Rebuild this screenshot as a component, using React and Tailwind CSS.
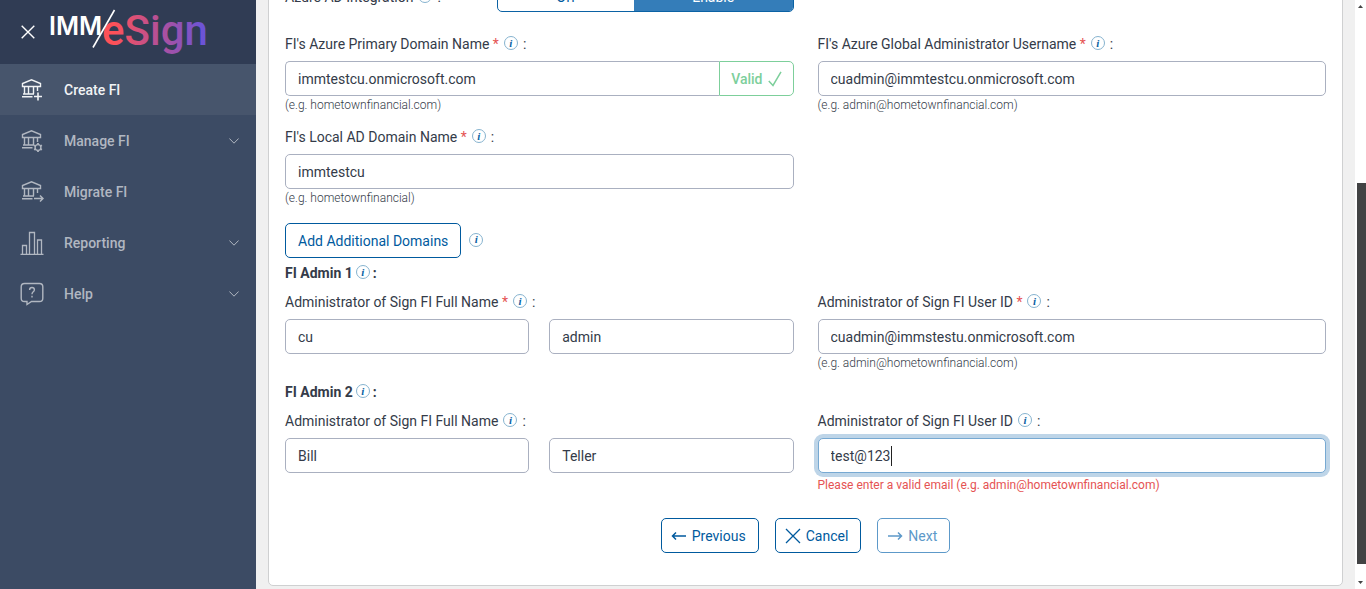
import React, { useState } from 'react';

const BankIcon = ({ children }) => (
  <svg viewBox="0 0 24 24" className="h-6 w-6 shrink-0" fill="none" stroke="currentColor" strokeWidth="1.4" aria-hidden="true">
    <path d="M2.5 8.5V5.5L11.5 1.8L20.5 5.5V8.5Z" />
    <path d="M4.5 8.5V16M8.5 8.5V16M13.5 8.5V16M17.5 8.5V13M3 16H14M2 18.7H12.5" />
    {children}
  </svg>
);

const CreateIcon = () => (
  <BankIcon>
    <path d="M18 14.5V22.5M14 18.5H22" strokeWidth="1.6" />
  </BankIcon>
);

const ManageIcon = () => (
  <BankIcon>
    <circle cx="18" cy="18.5" r="2.9" />
    <path d="M18 14V15.6M18 21.4V23M14.1 16.2L15.5 17M20.5 20L21.9 20.8M14.1 20.8L15.5 20M20.5 17L21.9 16.2" strokeWidth="1.8" />
  </BankIcon>
);

const MigrateIcon = () => (
  <BankIcon>
    <path d="M14 18.5H23M20 15.5L23 18.5L20 21.5" strokeWidth="1.5" />
  </BankIcon>
);

const ReportIcon = () => (
  <svg viewBox="0 0 24 24" className="h-6 w-6 shrink-0" fill="none" stroke="currentColor" strokeWidth="1.3" aria-hidden="true">
    <path d="M0.5 23.3H23.5M2.5 23V14.5H6.5V23M9.5 23V1.5H14.5V23M17.5 23V9H21.5V23" />
  </svg>
);

const HelpIcon = () => (
  <svg viewBox="0 0 24 24" className="h-6 w-6 shrink-0" fill="none" stroke="currentColor" strokeWidth="1.4" aria-hidden="true">
    <path d="M4.5 1.5H19.5Q22.8 1.5 22.8 4.8V16.2Q22.8 19.5 19.5 19.5H11.5L7 22.5V19.5H4.5Q1.2 19.5 1.2 16.2V4.8Q1.2 1.5 4.5 1.5Z" />
    <path d="M9.6 8Q9.6 5.5 12 5.5Q14.4 5.5 14.4 7.7Q14.4 9 13 10Q12 10.8 12 12.2M12 13.8V15.4" />
  </svg>
);

const Chevron = () => (
  <svg viewBox="0 0 10 6" className="h-[6px] w-[10px]" fill="none" stroke="currentColor" aria-hidden="true">
    <path d="M0.4 0.5L5 5.2L9.6 0.5" />
  </svg>
);

const Logo = () => (
  <svg viewBox="0 0 168 64" className="h-16 w-42" role="img" aria-label="IMM/eSign">
    <defs>
      <linearGradient id="brand" gradientUnits="userSpaceOnUse" x1="56" y1="0" x2="156" y2="0">
        <stop offset="0.1" stopColor="#fd5158" />
        <stop offset="0.5" stopColor="#bb5092" />
        <stop offset="1" stopColor="#6a54d8" />
      </linearGradient>
    </defs>
    <text x="1" y="35" fill="#fff" fontFamily="Inter, sans-serif" fontWeight="600" fontSize="25">IMM</text>
    <text x="54" y="45" fill="url(#brand)" fontFamily="Roboto, sans-serif" fontWeight="500" fontSize="42">eSign</text>
    <path d="M45 47.5L66.5 10" stroke="#fff" strokeWidth="1.6" />
  </svg>
);

const menu = [
  { label: 'Create FI', icon: CreateIcon, active: true },
  { label: 'Manage FI', icon: ManageIcon, expandable: true },
  { label: 'Migrate FI', icon: MigrateIcon },
  { label: 'Reporting', icon: ReportIcon, expandable: true },
  { label: 'Help', icon: HelpIcon, expandable: true },
];

const Sidebar = () => (
  <aside className="w-64 shrink-0 bg-[#3c4b64]">
    <div className="flex h-16 items-center gap-3 bg-[#303c54] pl-5">
      <button type="button" aria-label="Close menu" className="flex h-4 w-4 items-center justify-center text-white">
        <svg viewBox="0 0 14 14" className="h-[14px] w-[14px]" stroke="currentColor" strokeWidth="1.4" aria-hidden="true">
          <path d="M0.7 0.7L13.3 13.3M13.3 0.7L0.7 13.3" />
        </svg>
      </button>
      <Logo />
    </div>
    <nav>
      {menu.map(({ label, icon: Icon, active, expandable }) => (
        <a
          key={label}
          href="#"
          className={`flex h-[51px] items-center gap-5 pr-[17px] pl-5 text-sm font-medium ${
            active ? 'bg-[#47556c] text-[#f1f3f5]' : 'text-[#b1b7c1]'
          }`}
        >
          <Icon />
          <span className="flex-1">{label}</span>
          {expandable && <Chevron />}
        </a>
      ))}
    </nav>
  </aside>
);

const Info = () => (
  <button
    type="button"
    aria-label="More information"
    className="mb-0.5 flex h-[14px] w-[14px] shrink-0 items-center justify-center rounded-full border border-[#86b3cf] font-['Liberation_Serif',serif] text-[11px] leading-none font-bold text-[#0b62a4] italic"
  >
    i
  </button>
);

const FieldLabel = ({ id, required, children }) => (
  <div className="mb-[7px] flex h-5 items-center gap-[5px]">
    <label htmlFor={id}>
      {children}
      {required && <span className="text-[#e55353]"> *</span>}
    </label>
    <Info />
    <span>:</span>
  </div>
);

const inputClass = 'block h-[35px] w-full min-w-0 rounded-[5px] border border-[#aab0c0] bg-white px-3 outline-none';

const Hint = ({ children }) => <p className="mt-px h-4 text-xs leading-4 font-light">{children}</p>;

const Heading = ({ children }) => (
  <h2 className="flex h-5 items-center gap-[3px] font-bold">
    {children}
    <Info />
    <span>:</span>
  </h2>
);

const ActionButton = ({ disabled, children }) => (
  <button
    type="button"
    disabled={disabled}
    className={`flex h-[35px] items-center gap-[5px] rounded-[5px] border pr-3 pl-[9px] ${
      disabled ? 'border-[#5d99c9] text-[#5d99c9]' : 'border-[#005a9e] text-[#005a9e]'
    }`}
  >
    {children}
  </button>
);

const FullName = ({ id, first, last, required }) => (
  <div>
    <FieldLabel id={id} required={required}>Administrator of Sign FI Full Name</FieldLabel>
    <div className="grid grid-cols-2 gap-5">
      <input id={id} defaultValue={first} className={inputClass} />
      <input aria-label="Last name" defaultValue={last} className={inputClass} />
    </div>
  </div>
);

const Scrollbar = () => (
  <div className="flex w-[11px] shrink-0 flex-col items-end bg-white" aria-hidden="true">
    <svg viewBox="0 0 9 11" className="h-[11px] w-[9px]" fill="#444"><path d="M1 8L3.5 5L6 8Z" /></svg>
    <div className="flex-[172]" />
    <div className="w-[9px] flex-[381] bg-[#424344]" />
    <div className="flex-[14]" />
    <svg viewBox="0 0 9 11" className="h-[11px] w-[9px]" fill="#444"><path d="M1 3L3.5 6L6 3Z" /></svg>
  </div>
);

const App = () => {
  const [email, setEmail] = useState('test@123');

  return (
    <div className="flex h-screen overflow-hidden bg-[#f0f0f0] font-[Roboto,sans-serif] text-sm text-[#343b49]">
      <Sidebar />
      <main className="min-w-0 flex-1 px-3">
        <form className="-mt-9 rounded-[5px] border border-[#cfd0d1] bg-white px-4 pt-4 pb-8">
          <div className="grid grid-cols-2 gap-x-6">
            <div className="mb-[22px] grid grid-cols-12">
              <div className="col-span-5 flex items-center gap-[5px]">
                <span id="integration">Azure AD Integration</span>
                <Info />
                <span>:</span>
              </div>
              <div role="group" aria-labelledby="integration" className="col-span-7 flex h-[31px] overflow-hidden rounded-[5px] border border-[#0b62a4]">
                <button type="button" className="flex-[6] text-[#005a9e]">Off</button>
                <button type="button" className="flex-[7] bg-[#347db9] text-white">Enable</button>
              </div>
            </div>
          </div>

          <div className="grid grid-cols-2 gap-x-6 gap-y-[14px]">
            <div>
              <FieldLabel id="domain" required>FI's Azure Primary Domain Name</FieldLabel>
              <div className="flex">
                <input
                  id="domain"
                  defaultValue="immtestcu.onmicrosoft.com"
                  className="h-[35px] min-w-0 flex-1 rounded-l-[5px] border border-r-0 border-[#aab0c0] px-3 outline-none"
                />
                <span className="flex h-[35px] items-center gap-[5px] rounded-r-[5px] border border-[#7dcf9b] px-[11px] font-medium text-[#7dcf9b]">
                  Valid
                  <svg viewBox="0 0 14 16" className="h-4 w-[14px]" fill="none" stroke="currentColor" strokeWidth="1.5" aria-hidden="true">
                    <path d="M0.8 10L5 14.5L13 0.8" />
                  </svg>
                </span>
              </div>
              <Hint>(e.g. hometownfinancial.com)</Hint>
            </div>
            <div>
              <FieldLabel id="username" required>FI's Azure Global Administrator Username</FieldLabel>
              <input id="username" defaultValue="cuadmin@immtestcu.onmicrosoft.com" className={inputClass} />
              <Hint>(e.g. admin@hometownfinancial.com)</Hint>
            </div>
            <div>
              <FieldLabel id="local" required>FI's Local AD Domain Name</FieldLabel>
              <input id="local" defaultValue="immtestcu" className={inputClass} />
              <Hint>(e.g. hometownfinancial)</Hint>
            </div>
          </div>

          <div className="mt-[17px] mb-[5px] flex items-center gap-2">
            <button type="button" className="h-[35px] rounded-[5px] border border-[#005a9e] px-3 text-[#005a9e]">
              Add Additional Domains
            </button>
            <Info />
          </div>

          <section>
            <Heading>FI Admin 1</Heading>
            <div className="mt-[9px] grid grid-cols-2 gap-x-6">
              <FullName id="name1" first="cu" last="admin" required />
              <div>
                <FieldLabel id="user1" required>Administrator of Sign FI User ID</FieldLabel>
                <input id="user1" defaultValue="cuadmin@immstestu.onmicrosoft.com" className={inputClass} />
                <Hint>(e.g. admin@hometownfinancial.com)</Hint>
              </div>
            </div>
          </section>

          <section className="mt-[11px]">
            <Heading>FI Admin 2</Heading>
            <div className="mt-[9px] grid grid-cols-2 gap-x-6">
              <FullName id="name2" first="Bill" last="Teller" />
              <div>
                <FieldLabel id="user2">Administrator of Sign FI User ID</FieldLabel>
                <div className="relative">
                  <input
                    id="user2"
                    value={email}
                    onChange={(e) => setEmail(e.target.value)}
                    className="block h-[35px] w-full rounded-[5px] border border-[#77a9d2] bg-white px-3 caret-transparent ring-4 ring-[#bed5e8] outline-none"
                  />
                  <div className="pointer-events-none absolute inset-0 flex items-center px-[13px]" aria-hidden="true">
                    <span className="border-r border-[#222] text-transparent">{email}</span>
                  </div>
                </div>
                <p className="mt-1 h-[13px] text-xs leading-4 text-[#e55353]">
                  Please enter a valid email (e.g. admin@hometownfinancial.com)
                </p>
              </div>
            </div>
          </section>

          <div className="mt-7 flex justify-center gap-4">
            <ActionButton>
              <svg viewBox="0 0 16 10" className="h-[10px] w-4" fill="none" stroke="currentColor" strokeWidth="1.5" aria-hidden="true">
                <path d="M15 5H1.5M5 1.5L1.5 5L5 8.5" />
              </svg>
              Previous
            </ActionButton>
            <ActionButton>
              <svg viewBox="0 0 16 16" className="h-4 w-4" stroke="currentColor" strokeWidth="1.3" aria-hidden="true">
                <path d="M1 1L15 15M15 1L1 15" />
              </svg>
              Cancel
            </ActionButton>
            <ActionButton disabled>
              <svg viewBox="0 0 16 10" className="h-[10px] w-4" fill="none" stroke="currentColor" strokeWidth="1.5" aria-hidden="true">
                <path d="M1 5H14.5M11 1.5L14.5 5L11 8.5" />
              </svg>
              Next
            </ActionButton>
          </div>
        </form>
      </main>
      <Scrollbar />
    </div>
  );
};

export default App;
